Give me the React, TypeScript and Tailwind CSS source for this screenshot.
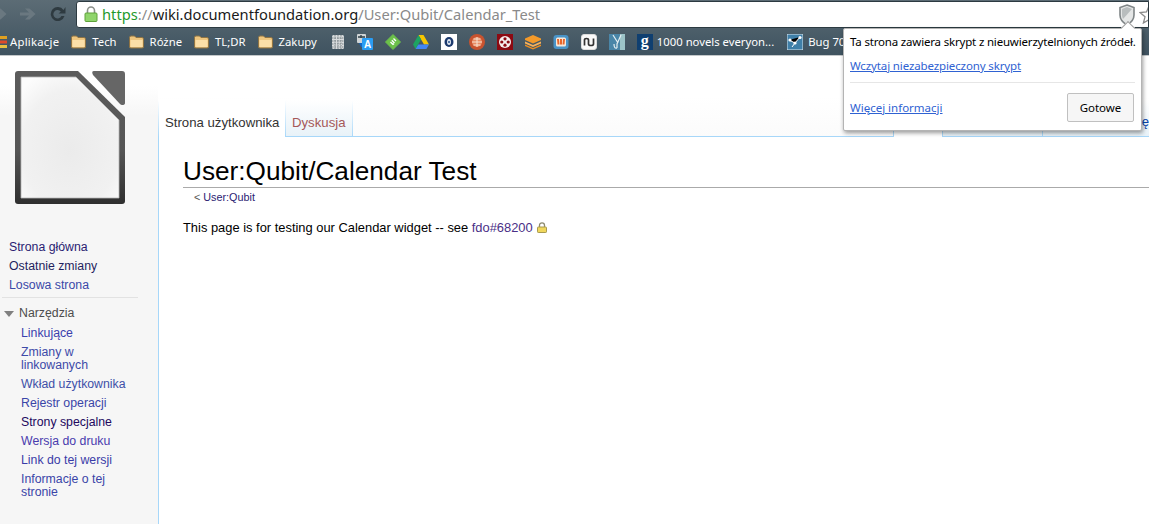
const side = '"Liberation Sans", Arial, sans-serif';

function Folder() {
  return (
    <svg width="15" height="14" viewBox="0 0 15 14" className="shrink-0">
      <path d="M.5 2.5 Q.5 1 2 1 H5.5 L7 2.5 H13 Q14.5 2.5 14.5 4 V12 Q14.5 13 13 13 H2 Q.5 13 .5 12 Z" fill="#efc67e" stroke="#8f7444" />
      <path d="M1.5 5 H13.5 V12 H1.5 Z" fill="#fbdfa8" />
    </svg>
  );
}

function Back({ fill, x }: { fill: string; x: number }) {
  return (
    <svg width="16" height="14" viewBox="0 0 16 14" className="shrink-0" style={{ marginLeft: x }}>
      <path d="M0 5.5 H9 L5 1.5 H9.5 L15.5 7 L9.5 12.5 H5 L9 8.5 H0 Z" fill={fill} />
    </svg>
  );
}

function Fav({ children }: { children: React.ReactNode }) {
  return (
    <svg width="16" height="16" viewBox="0 0 16 16" className="shrink-0">
      {children}
    </svg>
  );
}

function Bookmark({ label }: { label: string }) {
  return (
    <div className="flex items-center gap-[6px] shrink-0">
      <Folder />
      <span>{label}</span>
    </div>
  );
}

function Favicons() {
  return (
    <>
      <svg width="14" height="16" viewBox="0 0 14 16" className="shrink-0 ml-[2px]">
        <rect x="1" y="1" width="12" height="14" rx="1.5" fill="#d8dbdd" />
        <path d="M1 4H13M1 7H13M1 10H13M1 13H13M4 1V15M7 1V15M10 1V15" stroke="#7b8488" strokeWidth="1" strokeDasharray="1.5 1" />
      </svg>
      <Fav>
        <rect x="0" y="0" width="9" height="9" rx="1" fill="#cfd4d6" />
        <path d="M1 3H8M4 1V4" stroke="#2f3f47" strokeWidth="1.4" />
        <path d="M2 9 H6 V13 H4 Z" fill="#1565c0" />
        <rect x="5" y="4" width="11" height="12" rx="1" fill="#2a9df4" />
        <text x="10.5" y="14" textAnchor="middle" fontSize="10" fontWeight="700" fontFamily={side} fill="#fff">A</text>
      </Fav>
      <Fav>
        <path d="M8 .5 L15.5 8 L8 15.5 L.5 8 Z" fill="#6cc04a" stroke="#6cc04a" strokeLinejoin="round" />
        <path d="M8.5 4.5 L11 7 M6.8 6.3 L9.5 9 M5.5 8 L8 10.5 L9 9.8" stroke="#fff" strokeWidth="1.3" fill="none" />
      </Fav>
      <Fav>
        <path d="M5.5 1 H10.5 L16 10.5 H11 Z" fill="#f7c600" />
        <path d="M5.5 1 L0 10.5 L2.6 15 L8 5.6 Z" fill="#1da362" />
        <path d="M2.6 15 H13.4 L16 10.5 H5.3 Z" fill="#4285f4" />
      </Fav>
      <Fav>
        <rect width="16" height="16" fill="#ffffff" />
        <ellipse cx="8" cy="8" rx="4.5" ry="5" fill="#1c3a6e" />
        <ellipse cx="8" cy="8" rx="2" ry="3" fill="#dfe6ee" />
        <circle cx="8" cy="8" r="1" fill="#27508f" />
      </Fav>
      <Fav>
        <circle cx="8" cy="8" r="8" fill="#c8532f" />
        <circle cx="8" cy="8" r="5" fill="#e98a62" />
        <path d="M3 8H13M8 3V13M4.5 5H11.5M4.5 11H11.5" stroke="#f6e1d0" strokeWidth="1" />
      </Fav>
      <Fav>
        <rect width="16" height="16" fill="#8c0a12" />
        <circle cx="8" cy="8" r="6" fill="#f5eeee" />
        <circle cx="8" cy="4.8" r="1.6" fill="#8c0a12" />
        <circle cx="8" cy="11.2" r="1.6" fill="#8c0a12" />
        <circle cx="4.8" cy="8" r="1.6" fill="#8c0a12" />
        <circle cx="11.2" cy="8" r="1.6" fill="#8c0a12" />
      </Fav>
      <Fav>
        <path d="M8 1 L16 4.5 V6 L8 9.5 L0 6 V4.5 Z" fill="#f39a2a" />
        <path d="M0 7.5 L8 11 L16 7.5 V9.5 L8 13 L0 9.5 Z" fill="#f7b05a" />
        <path d="M0 10.5 L8 14 L16 10.5 V12 L8 15.5 L0 12 Z" fill="#ef8f1f" />
      </Fav>
      <Fav>
        <rect x="0.5" y="1" width="15" height="14" rx="3" fill="#4a94c8" />
        <rect x="3" y="3.5" width="10" height="9" rx="1.5" fill="#f6e9dc" />
        <path d="M5.5 10.5 L5 5 M8 10.5 L8 5 M10.5 10.5 L11 5" stroke="#e8662a" strokeWidth="2" />
      </Fav>
      <Fav>
        <rect x="0.5" y="0.5" width="15" height="15" rx="2.5" fill="#fafafa" stroke="#dcdcdc" />
        <path d="M3.5 11.5 V6 Q3.5 4.5 5.5 4.5 Q7.5 4.5 7.5 6 V10 Q7.5 11.5 10 11.5 Q12.5 11.5 12.5 10 V4.5" fill="none" stroke="#333" strokeWidth="1.7" />
      </Fav>
      <Fav>
        <rect width="16" height="16" fill="#4a86a8" />
        <rect x="11" width="5" height="16" fill="#9cc4c8" />
        <path d="M4 1 L9 9 M12 1 L8 10 V14 M5 10 Q5 15 8 14" stroke="#e3eef2" strokeWidth="1.2" fill="none" />
      </Fav>
      <div className="w-4 h-4 bg-[#0f3f70] shrink-0 flex items-center justify-center text-white font-bold text-[16px] leading-[16px] pb-[2px] font-['Liberation_Serif',serif]">
        g
      </div>
    </>
  );
}

const navTop = [
  { t: 'Strona główna', c: 'text-[#2a1c72]' },
  { t: 'Ostatnie zmiany', c: 'text-[#1f1f5e]' },
  { t: 'Losowa strona', c: 'text-[#3a49a8]' },
];

const navTools = [
  { t: 'Linkujące', c: 'text-[#3a40ae]' },
  { t: 'Zmiany w linkowanych', c: 'text-[#3d4aa8]' },
  { t: 'Wkład użytkownika', c: 'text-[#4050a8]' },
  { t: 'Rejestr operacji', c: 'text-[#3a45a8]' },
  { t: 'Strony specjalne', c: 'text-[#22085e]' },
  { t: 'Wersja do druku', c: 'text-[#4a3cae]' },
  { t: 'Link do tej wersji', c: 'text-[#3a3ca8]' },
  { t: 'Informacje o tej stronie', c: 'text-[#3a45a8]' },
];

function Popup() {
  return (
    <div className="absolute left-[843px] top-[28px] w-[299px] h-[103px] bg-white border border-[#b4b4b4] rounded-[2px] shadow-[1px_2px_4px_rgba(0,0,0,0.4)] font-['Noto_Sans',sans-serif] text-[11.5px] text-black px-[6px] z-10">
      <div className="absolute -top-[6px] left-[279px] w-[10px] h-[10px] rotate-45 bg-white border-l border-t border-[#a0a0a0]" />
      <div className="relative h-[25px] pt-[4px] leading-[17px] whitespace-nowrap tracking-[-0.18px]">
        Ta strona zawiera skrypt z nieuwierzytelnionych źródeł.
      </div>
      <div className="h-[29px] pt-[3px] leading-[17px] border-b border-[#e6e6e6]">
        <a className="text-[#2f62d2] underline whitespace-nowrap tracking-[-0.12px]">Wczytaj niezabezpieczony skrypt</a>
      </div>
      <div className="flex items-center justify-between pt-[10px] pr-[1px]">
        <a className="text-[#2f62d2] underline">Więcej informacji</a>
        <button className="w-[67px] h-[29px] bg-[#f6f6f6] border border-[#c0c0c0] rounded-[2px] text-[11.5px] text-black">
          Gotowe
        </button>
      </div>
    </div>
  );
}

export default function App() {
  return (
    <div className="relative w-[1149px] h-[524px] overflow-hidden flex flex-col bg-white font-['Liberation_Sans',Arial,sans-serif]">
      {/* browser chrome */}
      <header className="h-[56px] shrink-0 flex flex-col bg-[linear-gradient(#5c6c75,#3f5360)] border-b border-[#c4c8ca]">
        <div className="h-[28px] shrink-0 flex items-center">
          <Back fill="#6a7880" x={-9} />
          <Back fill="#6a7880" x={13} />
          <svg width="18" height="18" viewBox="0 0 18 18" className="shrink-0 ml-[13px]">
            <path d="M14.5 5 A7 7 0 1 0 15.5 11 H12.4 A4.2 4.2 0 1 1 11.8 6.6 L9.6 8.6 H16.5 V2 Z" fill="#2e3a40" />
          </svg>
          <div className="ml-[9px] flex-1 h-[27px] bg-white border border-[#2c3a41] rounded-l-[3px] flex items-center">
            <svg width="14" height="16" viewBox="0 0 14 16" className="shrink-0 ml-[7px]">
              <path d="M3.5 7 V4.5 A3.5 3.5 0 0 1 10.5 4.5 V7" fill="none" stroke="#8a8f8a" strokeWidth="1.6" />
              <rect x="1" y="7" width="12" height="8.5" rx="1" fill="#8fd46b" stroke="#5ea23a" />
            </svg>
            <div className="ml-[4px] flex-1 text-[14.7px] leading-none whitespace-nowrap font-['Noto_Sans',sans-serif]">
              <span className="text-[#1f9a2c]">https</span>
              <span className="text-[#8a8a8a]">://</span>
              <span className="text-[#1a1a1a]">wiki.documentfoundation.org</span>
              <span className="text-[#8a8a8a]">/User:Qubit/Calendar_Test</span>
            </div>
            <svg width="18" height="22" viewBox="0 0 18 22" className="shrink-0 mr-[3px] mt-[1px]">
              <path d="M9 1 L16 3.5 V11 Q16 17 9 21 Q2 17 2 11 V3.5 Z" fill="#e4e6e6" stroke="#7f8587" strokeWidth="1.6" />
              <path d="M9 3 L14 5 L5 15 Q4 13 4 11 V5 Z" fill="#b8bdbe" />
            </svg>
            <svg width="9" height="20" viewBox="0 0 9 20" className="shrink-0">
              <path d="M10 2 L12.5 8 L19 8.5 L14 12.8 L15.6 19 L10 15.8 L4.4 19 L6 12.8 L1 8.5 L7.5 8 Z" fill="#fff" stroke="#8a8a8a" strokeWidth="1.3" />
            </svg>
          </div>
        </div>
        <div className="flex-1 flex items-center gap-[12px] pt-[1px] text-[11.3px] text-white whitespace-nowrap font-['Noto_Sans',sans-serif] overflow-hidden">
          <div className="flex items-center gap-[3px] shrink-0 -ml-[3px]">
            <svg width="10" height="14" viewBox="0 0 10 14" className="shrink-0">
              <path d="M0 1H10V4H0Z" fill="#e0a020" />
              <path d="M0 5.5H10V8.5H0Z" fill="#e04a2a" />
              <path d="M0 10H10V13H0Z" fill="#e8c040" />
            </svg>
            <span className="tracking-[0.25px]">Aplikacje</span>
          </div>
          <Bookmark label="Tech" />
          <Bookmark label="Różne" />
          <Bookmark label="TL;DR" />
          <Bookmark label="Zakupy" />
          <Favicons />
          <span className="shrink-0 -ml-[8px]">1000 novels everyon...</span>
          <div className="flex items-center gap-[5px] shrink-0 ml-[1px]">
            <Fav>
              <rect width="16" height="16" fill="#3f7fa8" stroke="#d8e4ea" />
              <path d="M2 6 L8 9 L13 3 M8 9 L5 13" stroke="#fff" strokeWidth="1" />
              <circle cx="3" cy="6" r="1.6" fill="#fff" />
              <circle cx="8" cy="9" r="1.6" fill="#fff" />
              <circle cx="13" cy="3.5" r="1.6" fill="#fff" />
            </Fav>
            <span>Bug 70</span>
          </div>
        </div>
      </header>

      {/* page */}
      <div className="flex-1 flex min-h-0">
        <aside className="w-[158px] shrink-0 bg-[linear-gradient(#ffffff_0,#ffffff_30px,#f6f6f6_60px)] text-[12.3px] leading-[13px]">
          <svg width="110" height="133" viewBox="0 0 110 133" className="mt-[15px] ml-[15px]">
            <defs>
              <linearGradient id="rim" x1="0" y1="0" x2="0" y2="1">
                <stop offset="0" stopColor="#5c5c5c" />
                <stop offset="0.6" stopColor="#555555" />
                <stop offset="1" stopColor="#2f2f2f" />
              </linearGradient>
              <radialGradient id="sheet" cx="0.5" cy="0.6" r="0.7">
                <stop offset="0" stopColor="#ebebeb" />
                <stop offset="0.7" stopColor="#f1f1f1" />
                <stop offset="1" stopColor="#fcfcfc" />
              </radialGradient>
            </defs>
            <path d="M3 0 H63 L110 46 V130 Q110 133 107 133 H3 Q0 133 0 130 V3 Q0 0 3 0 Z" fill="url(#rim)" />
            <path d="M6 6 H61 L104 49 V127 H6 Z" fill="url(#sheet)" stroke="#b5b5b5" strokeWidth="0.8" />
            <path d="M79 0 H107 Q110 0 110 3 V32 Q110 34 107 34 Q106 34 105 33 L78 4 Q76 0 79 0 Z" fill="#666666" />
          </svg>
          <ul className="mt-[37px] pl-[9px] flex flex-col gap-[6px]">
            {navTop.map((n) => (
              <li key={n.t} className={n.c}>{n.t}</li>
            ))}
          </ul>
          <div className="mt-[5px] ml-[2px] w-[136px] h-px bg-[#e2e2e2]" />
          <div className="mt-[9px] flex items-center text-[#4d4d4d]">
            <svg width="10" height="6" viewBox="0 0 10 6" className="ml-[4px] shrink-0">
              <path d="M0 0 H10 L5 6 Z" fill="#808080" />
            </svg>
            <span className="ml-[5px]">Narzędzia</span>
          </div>
          <ul className="mt-[7px] pl-[21px] pr-[30px] flex flex-col gap-[6px]">
            {navTools.map((n) => (
              <li key={n.t} className={n.c}>{n.t}</li>
            ))}
          </ul>
        </aside>

        <main className="flex-1 min-w-0 flex flex-col">
          <div className="h-[81px] shrink-0 flex items-end bg-[linear-gradient(#ffffff_50%,#fbfbfb_100%)] text-[13.2px]">
            <div className="w-px h-[37px] shrink-0 bg-[linear-gradient(#ffffff,#a7d7f9)]" />
            <div className="w-[126px] h-[37px] shrink-0 flex items-center pl-[6px] bg-white text-[#333333] pt-[9px] whitespace-nowrap">
              Strona użytkownika
            </div>
            <div className="w-px h-[37px] shrink-0 bg-[linear-gradient(#ffffff,#a7d7f9)]" />
            <div className="w-[66px] h-[37px] shrink-0 flex items-center pl-[6px] pt-[9px] border-b border-[#a7d7f9] bg-[linear-gradient(#ffffff,#e8f2f8)] text-[#a55858]">
              Dyskusja
            </div>
            <div className="w-px h-[37px] shrink-0 bg-[linear-gradient(#ffffff,#a7d7f9)]" />
            <div className="flex-1 border-b border-[#a7d7f9]" />
            <div className="w-px h-[37px] shrink-0 bg-[linear-gradient(#ffffff,#a7d7f9)]" />
            <div className="w-[48px] h-[37px] shrink-0 bg-white" />
            <div className="w-px h-[37px] shrink-0 bg-[linear-gradient(#ffffff,#a7d7f9)]" />
            <div className="w-[99px] h-[37px] shrink-0 border-b border-[#a7d7f9] bg-[linear-gradient(#ffffff,#e8f2f8)]" />
            <div className="w-px h-[37px] shrink-0 bg-[linear-gradient(#ffffff,#a7d7f9)]" />
            <div className="w-[106px] h-[37px] shrink-0 flex items-center justify-end pt-[7px] border-b border-[#a7d7f9] bg-[linear-gradient(#ffffff,#e8f2f8)] text-[#0645ad] whitespace-nowrap overflow-hidden">
              historię
            </div>
          </div>
          <div className="flex-1 border-l border-[#a7d7f9] bg-white pl-[24px] text-black">
            <h1 className="pt-[19px] h-[51px] text-[26.2px] leading-[30px] text-black border-b border-[#aaaaaa] whitespace-nowrap">
              User:Qubit/Calendar Test
            </h1>
            <div className="mt-[3px] pl-[11px] text-[10.8px] leading-[13px] text-[#2a1c72]">
              <span className="text-[#555555]">&lt; </span>User:Qubit
            </div>
            <p className="mt-[16px] text-[12.9px] leading-[15px] flex items-center whitespace-nowrap">
              <span>This page is for testing our Calendar widget -- see&nbsp;</span>
              <span className="text-[#4a2f86]">fdo#68200</span>
              <svg width="10" height="11" viewBox="0 0 10 11" className="ml-[4px] shrink-0">
                <path d="M2.5 5 V3.3 A2.5 2.5 0 0 1 7.5 3.3 V5" fill="none" stroke="#8d8a70" strokeWidth="1.3" />
                <rect x="0.5" y="5" width="9" height="5.5" rx="0.7" fill="#f0d75c" stroke="#a89a50" />
              </svg>
            </p>
          </div>
        </main>
      </div>

      <Popup />
    </div>
  );
}
